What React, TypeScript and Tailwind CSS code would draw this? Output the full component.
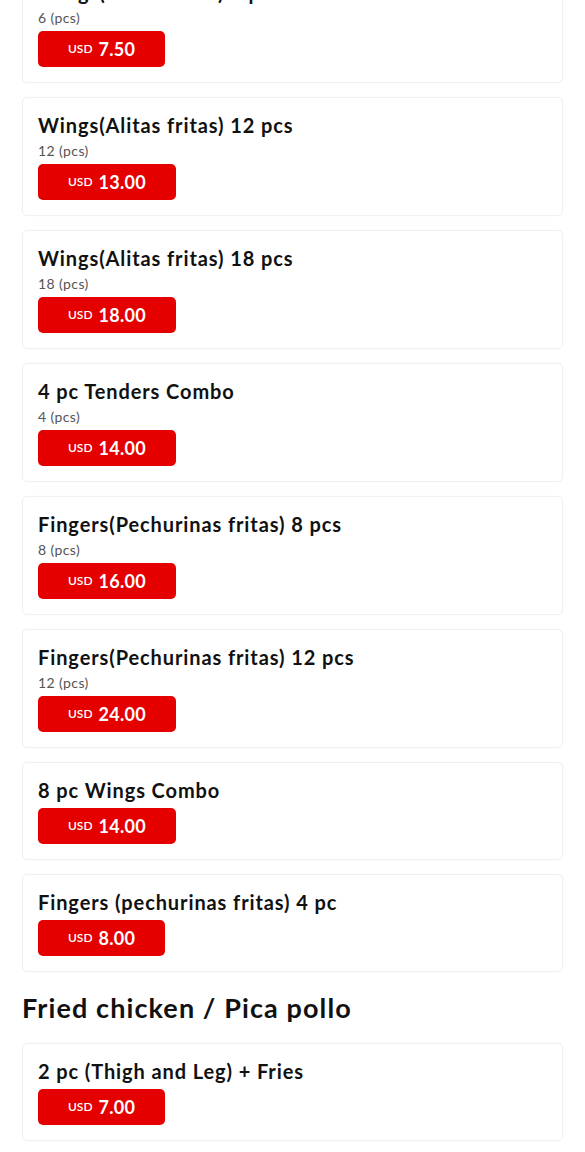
import React from 'react';

interface MenuItem {
  name: string;
  pieces?: string;
  price: string;
}

const wingItems: MenuItem[] = [
  { name: 'Wings(Alitas fritas) 6 pcs', pieces: '6 (pcs)', price: '7.50' },
  { name: 'Wings(Alitas fritas) 12 pcs', pieces: '12 (pcs)', price: '13.00' },
  { name: 'Wings(Alitas fritas) 18 pcs', pieces: '18 (pcs)', price: '18.00' },
  { name: '4 pc Tenders Combo', pieces: '4 (pcs)', price: '14.00' },
  { name: 'Fingers(Pechurinas fritas) 8 pcs', pieces: '8 (pcs)', price: '16.00' },
  { name: 'Fingers(Pechurinas fritas) 12 pcs', pieces: '12 (pcs)', price: '24.00' },
  { name: '8 pc Wings Combo', price: '14.00' },
  { name: 'Fingers (pechurinas fritas) 4 pc', price: '8.00' }
];

const chickenItems: MenuItem[] = [
  { name: '2 pc (Thigh and Leg) + Fries', price: '7.00' }
];

const ItemCard: React.FC<{ item: MenuItem }> = ({ item }) => (
  <div className="rounded-[5px] border border-[#f0f0f0] bg-white px-[15px] pt-[15px] pb-[15px] shadow-[0_0_2px_rgba(0,0,0,0.03)]">
    <h3 className="text-[20px] leading-[24px] font-bold tracking-[0.9px] text-[#111]">{item.name}</h3>
    {item.pieces && (
      <p className="mt-[5px] text-[14px] leading-[18px] tracking-[0.4px] text-[#555]">{item.pieces}</p>
    )}
    <button
      className={`${item.pieces ? 'mt-[4px]' : 'mt-[6px]'} flex h-[36px] items-center gap-[6px] rounded-[5px] bg-[#e50000] px-[30px] text-white`}
    >
      <span className="text-[12px] font-semibold">USD</span>
      <span className="text-[18px] font-bold tracking-[0.3px]">{item.price}</span>
    </button>
  </div>
);

export default function App() {
  return (
    <div className="min-h-screen overflow-hidden bg-white px-[22px] font-['Lato',sans-serif]">
      <div className="-mt-[36px] flex flex-col gap-[14px]">
        {wingItems.map((item) => (
          <ItemCard key={item.name} item={item} />
        ))}
      </div>

      {/* Fried chicken section */}
      <h2 className="mt-[18px] mb-[17px] text-[27px] leading-[36px] font-bold tracking-[1.1px] text-[#111]">
        Fried chicken / Pica pollo
      </h2>
      <div className="flex flex-col gap-[14px] pb-[20px]">
        {chickenItems.map((item) => (
          <ItemCard key={item.name} item={item} />
        ))}
      </div>
    </div>
  );
}
